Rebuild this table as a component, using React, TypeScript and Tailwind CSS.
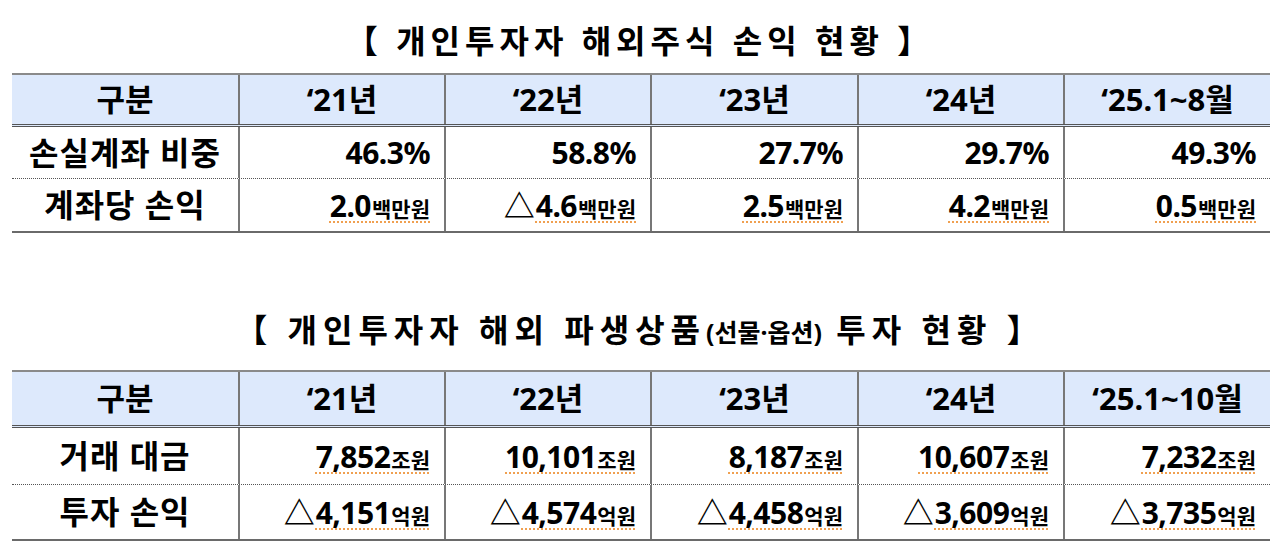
import React from "react";

type Cell = { pre?: string; num: string; unit?: string };

const COLS = "grid-cols-[226px_206px_206px_207px_206px_207px]";

function HeaderRow({ cols, h }: { cols: string[]; h: string }) {
  return (
    <div className={`grid ${COLS} bg-[#dde9fc] border-t-2 border-[#8a8a8a] border-b-[3px] border-b-[#555] [border-bottom-style:double]`}>
      {cols.map((c, i) => (
        <div
          key={i}
          className={`${h} flex items-center justify-center text-[31px] font-bold text-black ${i > 0 ? "border-l-2 border-[#777]" : ""}`}
        >
          {c}
        </div>
      ))}
    </div>
  );
}

function DataRow({
  label,
  cells,
  h,
  dotted,
  underline,
}: {
  label: string;
  cells: Cell[];
  h: string;
  dotted?: boolean;
  underline?: boolean;
}) {
  return (
    <div
      className={`grid ${COLS} ${dotted ? "border-b border-dotted border-[#555]" : "border-b-2 border-[#6a6a6a]"}`}
    >
      <div className={`${h} flex items-center justify-center text-[32px] tracking-[1px] font-bold text-black`}>
        {label}
      </div>
      {cells.map((c, i) => (
        <div
          key={i}
          className={`${h} flex items-center justify-end pr-[14px] border-l-2 border-[#777] text-black font-bold`}
        >
          <span className="whitespace-nowrap">
            {c.pre && <span className="text-[31px] mr-[1px]">{c.pre}</span>}
            <span
              className={
                underline
                  ? "underline decoration-dotted decoration-[#f0a050] decoration-[1.5px] underline-offset-[5px]"
                  : ""
              }
            >
              <span className="text-[30px] tracking-[-0.5px]">{c.num}</span>
              {c.unit && <span className="text-[21px] ml-[1px]">{c.unit}</span>}
            </span>
          </span>
        </div>
      ))}
    </div>
  );
}

export default function App() {
  return (
    <div className="w-[1280px] h-[560px] bg-white font-['Noto_Sans','Noto_Sans_CJK_KR',sans-serif] overflow-hidden">
      <div className="h-[73px] flex items-center justify-center pt-[8px]">
        <div className="text-[32px] font-bold text-black tracking-[5px] whitespace-pre">
          【 개인투자자 해외주식 손익 현황 】
        </div>
      </div>
      <div className="ml-[12px] w-[1258px]">
        <HeaderRow h="h-[49px]" cols={["구분", "‘21년", "‘22년", "‘23년", "‘24년", "‘25.1~8월"]} />
        <DataRow
          h="h-[51px]"
          dotted
          label="손실계좌 비중"
          cells={[
            { num: "46.3%" },
            { num: "58.8%" },
            { num: "27.7%" },
            { num: "29.7%" },
            { num: "49.3%" },
          ]}
        />
        <DataRow
          h="h-[52px]"
          underline
          label="계좌당 손익"
          cells={[
            { num: "2.0", unit: "백만원" },
            { pre: "△", num: "4.6", unit: "백만원" },
            { num: "2.5", unit: "백만원" },
            { num: "4.2", unit: "백만원" },
            { num: "0.5", unit: "백만원" },
          ]}
        />
      </div>

      <div className="h-[137px] flex items-center justify-center pt-[57px]">
        <div className="text-[32px] font-bold text-black tracking-[6px] whitespace-pre">
          【 개인투자자 해외 파생상품<span className="text-[25px] tracking-[0px]">(선물·옵션)</span> 투자 현황 】
        </div>
      </div>
      <div className="ml-[12px] w-[1258px]">
        <HeaderRow h="h-[53px]" cols={["구분", "‘21년", "‘22년", "‘23년", "‘24년", "‘25.1~10월"]} />
        <DataRow
          h="h-[56px]"
          dotted
          underline
          label="거래 대금"
          cells={[
            { num: "7,852", unit: "조원" },
            { num: "10,101", unit: "조원" },
            { num: "8,187", unit: "조원" },
            { num: "10,607", unit: "조원" },
            { num: "7,232", unit: "조원" },
          ]}
        />
        <DataRow
          h="h-[54px]"
          underline
          label="투자 손익"
          cells={[
            { pre: "△", num: "4,151", unit: "억원" },
            { pre: "△", num: "4,574", unit: "억원" },
            { pre: "△", num: "4,458", unit: "억원" },
            { pre: "△", num: "3,609", unit: "억원" },
            { pre: "△", num: "3,735", unit: "억원" },
          ]}
        />
      </div>
    </div>
  );
}
